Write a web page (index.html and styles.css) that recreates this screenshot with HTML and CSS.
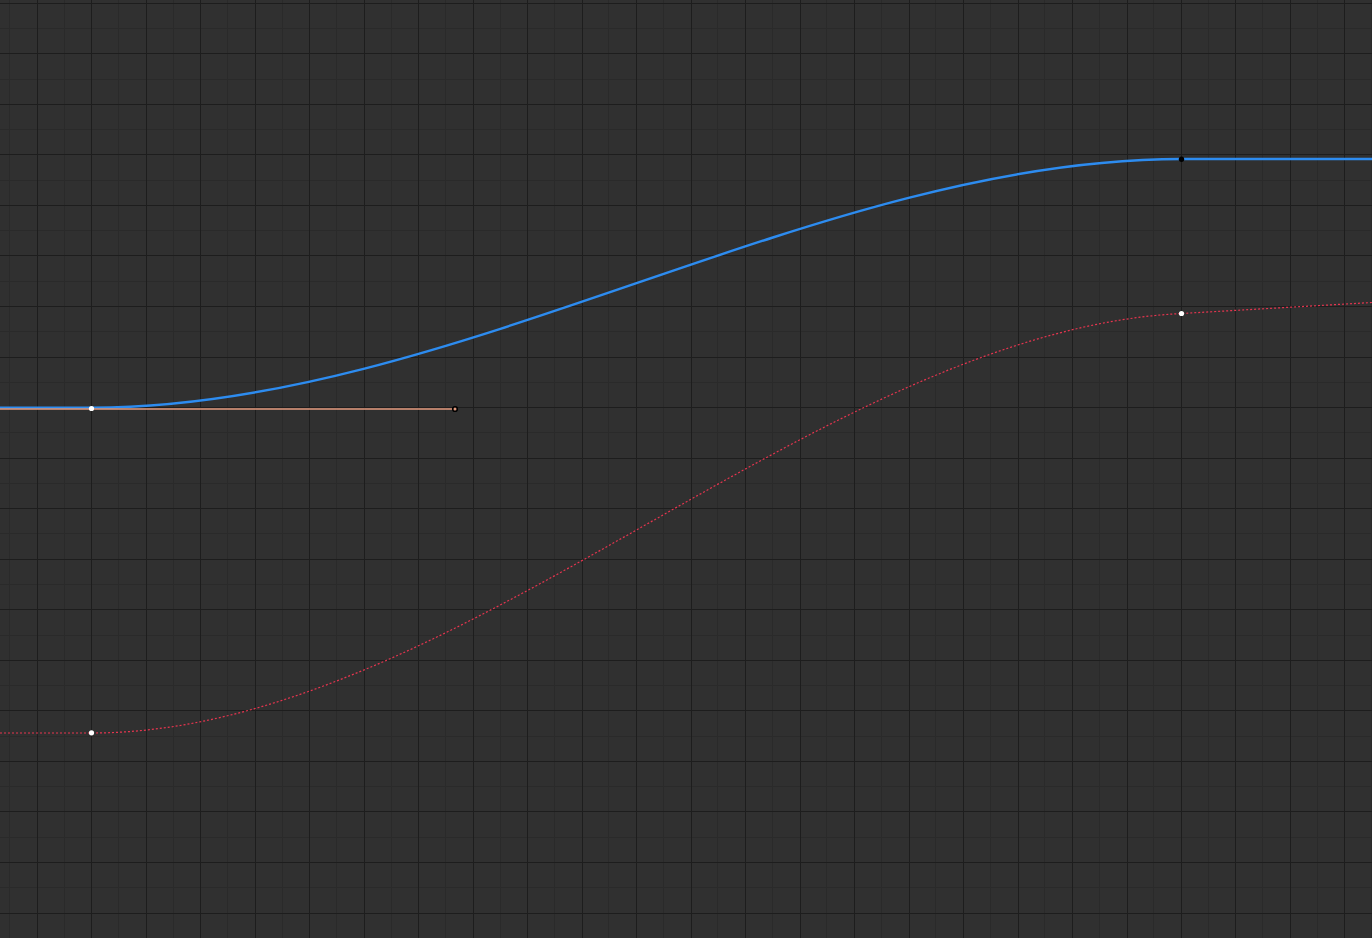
FILE: index.html
```html
<!DOCTYPE html>
<html lang="en">
<head>
  <meta charset="UTF-8" />
  <meta name="viewport" content="width=device-width, initial-scale=1" />
  <title>Graph Editor</title>
  <link rel="stylesheet" href="styles.css">
</head>
<body>
  <div class="graph-editor">
    <svg id="view" class="view" width="1372" height="938" viewBox="0 0 1372 938">
      <g id="grid"></g>

      <!-- Y Rotation, not selected: dashed -->
      <path class="fcurve fcurve-rot" d="M0,733 H91.5 C454.5,733 817.5,332 1181.5,313.5 L1372,302.5" />

      <!-- Z Location, selected -->
      <path class="fcurve fcurve-loc" d="M0,407.6 H91.5 C454.5,407.6 817.5,159 1181.5,159 H1372" />

      <!-- handle of the active key -->
      <line class="handle" x1="0" y1="409.1" x2="455" y2="409.1" />
      <circle class="handle-pt" cx="455" cy="409" r="2.3" />

      <circle class="key" cx="91.5" cy="408.5" r="2.6" />
      <circle class="key key-off" cx="1181.5" cy="159.3" r="2.7" />
      <circle class="key" cx="1181.5" cy="313.5" r="2.6" />
      <circle class="key" cx="91.5" cy="732.8" r="2.6" />
    </svg>
  </div>

  <script>
    const grid = document.getElementById("grid");
    const W = 1372, H = 938;
    const stepX = 54.476, stepY = 50.54;
    const originX = 37, originY = 3.3;

    function addLine(x1, y1, x2, y2, cls) {
      const l = document.createElementNS("http://www.w3.org/2000/svg", "line");
      l.setAttribute("x1", x1);
      l.setAttribute("y1", y1);
      l.setAttribute("x2", x2);
      l.setAttribute("y2", y2);
      l.setAttribute("class", cls);
      grid.appendChild(l);
    }

    // minor lines first, major ones on top
    for (let x = originX - stepX / 2; x < W; x += stepX) {
      const px = Math.floor(x) + 0.5;
      addLine(px, 0, px, H, "grid-minor");
    }
    for (let y = originY - stepY / 2; y < H; y += stepY) {
      if (y < 0) continue;
      const py = Math.floor(y) + 0.5;
      addLine(0, py, W, py, "grid-minor");
    }
    for (let x = originX; x < W; x += stepX) {
      const px = Math.round(x) + 0.5;
      addLine(px, 0, px, H, "grid-major");
    }
    for (let y = originY; y < H; y += stepY) {
      const py = Math.floor(y) + 0.5;
      addLine(0, py, W, py, "grid-major");
    }
  </script>
</body>
</html>
```

FILE: styles.css
```css
html, body {
  margin: 0;
  padding: 0;
  background: #303030;
  overflow: hidden;
}

.graph-editor {
  width: 1372px;
  height: 938px;
  background: #303030;
}

.view {
  display: block;
}

.grid-minor {
  stroke: #2a2a2a;
  stroke-width: 1;
  shape-rendering: crispEdges;
}

.grid-major {
  stroke: #1d1d1d;
  stroke-width: 1;
  shape-rendering: crispEdges;
}

.fcurve {
  fill: none;
}

.fcurve-loc {
  stroke: #2d8cf0;
  stroke-width: 2.4;
}

.fcurve-rot {
  stroke: #e5354f;
  stroke-width: 1.2;
  stroke-dasharray: 2 2;
}

.handle {
  stroke: #e39a7e;
  stroke-width: 1.5;
}

.handle-pt {
  fill: #e39a7e;
  stroke: #000;
  stroke-width: 1.6;
}

.key {
  fill: #fff;
}

.key-off {
  fill: #000;
}
```
